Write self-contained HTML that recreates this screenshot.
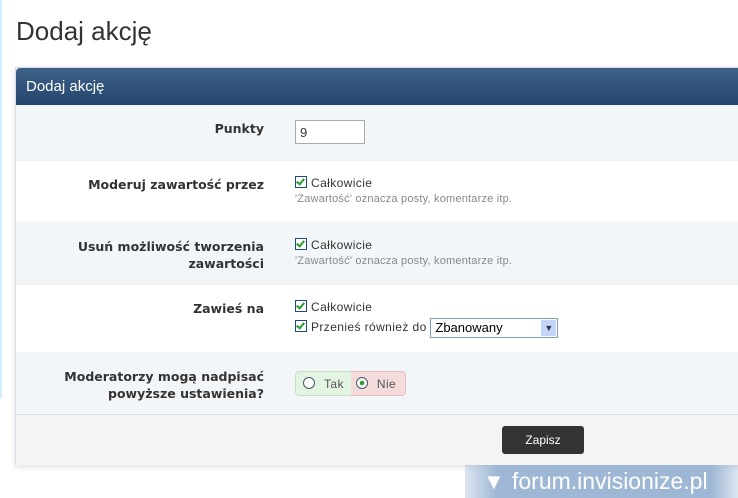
<!DOCTYPE html>
<html><head><meta charset="utf-8"><style>
body{margin:0;width:738px;height:498px;overflow:hidden;background:#fff;font-family:"Liberation Sans",Arial,sans-serif;position:relative}
.strip{position:absolute;left:0;top:0;width:2px;height:398px;background:#cdeefc}
h1{position:absolute;left:16px;top:16px;margin:0;font-weight:normal;font-size:26px;color:#333}
.box{position:absolute;left:15px;top:67px;width:740px;height:396px;border:1px solid #d5dde5;box-shadow:0 2px 6px rgba(0,0,0,.12);background:#fff}
.hd{height:37px;background:linear-gradient(#3f6289,#23456d);color:#fff;font-size:15px;line-height:37px;padding-left:10px;border-radius:4px 4px 0 0}
.row{position:relative;border-bottom:1px solid #eef0f3}
.alt{background:#f3f6f9}
.lbl{position:absolute;right:492px;width:240px;text-align:right;font-weight:bold;font-size:12.5px;color:#333;line-height:17px;font-family:"DejaVu Sans",Verdana,sans-serif}
.fld{position:absolute;left:279px;font-size:12px;color:#333;letter-spacing:.4px}
.cb{display:inline-block;width:10px;height:10px;border:1px solid #1c4c7a;vertical-align:-1px;margin-right:4px;position:relative;background:#fff}
.cb:after{content:"";position:absolute;left:2px;top:0px;width:3px;height:6px;border:solid #2a9a2a;border-width:0 2px 2px 0;transform:rotate(40deg)}
.desc{font-size:11px;color:#888;margin-top:3px;letter-spacing:.2px}
.foot{position:absolute;left:0;top:346px;width:100%;height:50px;background:#f4f4f4;border-top:1px solid #ddd}
.btn{position:absolute;left:486px;top:11px;width:82px;height:28px;background:#333;border-radius:3px;color:#fff;font-size:12px;text-align:center;line-height:28px}
.wm{position:absolute;left:465px;top:465px;width:273px;height:33px;background:linear-gradient(90deg,rgba(140,170,205,.3),#9db7d4 12%,#9db7d4 90%,rgba(140,170,205,.3));color:#fff;font-size:23px;line-height:33px;padding-left:47px;box-sizing:border-box}
</style></head><body>
<div class="strip"></div>
<h1>Dodaj akcję</h1>
<div class="box">
<div class="hd">Dodaj akcję</div>
<div class="row alt" style="height:55px"><div class="lbl" style="top:15px">Punkty</div>
<div class="fld" style="top:15px"><div style="width:70px;height:24px;border:1px solid #aaa;box-sizing:border-box;font-size:13px;padding:5px 4px;line-height:14px;background:#fff">9</div></div></div>
<div class="row" style="height:61px"><div class="lbl" style="top:15px">Moderuj zawartość przez</div>
<div class="fld" style="top:15px"><span class="cb"></span>Całkowicie<div class="desc">'Zawartość' oznacza posty, komentarze itp.</div></div></div>
<div class="row alt" style="height:61px"><div class="lbl" style="top:15px">Usuń możliwość tworzenia zawartości</div>
<div class="fld" style="top:15px"><span class="cb"></span>Całkowicie<div class="desc">'Zawartość' oznacza posty, komentarze itp.</div></div></div>
<div class="row" style="height:67px"><div class="lbl" style="top:15px">Zawieś na</div>
<div class="fld" style="top:15px"><span class="cb"></span>Całkowicie<div style="margin-top:4px"><span class="cb"></span>Przenieś również do <span style="display:inline-block;width:128px;height:20px;border:1px solid #7f9db9;vertical-align:middle;box-sizing:border-box;font-size:13px;line-height:18px;padding-left:4px;position:relative;color:#000;letter-spacing:0">Zbanowany<span style="position:absolute;right:1px;top:1px;width:15px;height:16px;background:#c4d4f6;font-size:9px;line-height:16px;text-align:center;color:#335">▼</span></span></div></div></div>
<div class="row alt" style="height:61px"><div class="lbl" style="top:15px">Moderatorzy mogą nadpisać powyższe ustawienia?</div>
<div class="fld" style="top:18px"><div style="display:flex;height:25px;border-radius:4px;overflow:hidden;font-size:12px;line-height:25px">
<div style="background:#e3f4e3;border:1px solid #bfe3bf;border-right:0;padding:0 7px;border-radius:4px 0 0 4px;color:#555"><span style="display:inline-block;width:10px;height:10px;border:1px solid #456;border-radius:50%;vertical-align:-1px;margin-right:9px;background:#fff"></span>Tak</div>
<div style="background:#f5dcdc;border:1px solid #e8bcbc;border-left:0;padding:0 9px 0 5px;border-radius:0 4px 4px 0;color:#555"><span style="display:inline-block;width:10px;height:10px;border:1px solid #456;border-radius:50%;vertical-align:-1px;margin-right:9px;background:radial-gradient(#2a9a2a 2px,#fff 2.5px)"></span>Nie</div></div></div></div>
<div class="foot"><div class="btn">Zapisz</div></div>
</div>
<div class="wm">forum.invisionize.pl<span style="position:absolute;left:18px;top:0;font-size:22px">▼</span></div>
</body></html>
